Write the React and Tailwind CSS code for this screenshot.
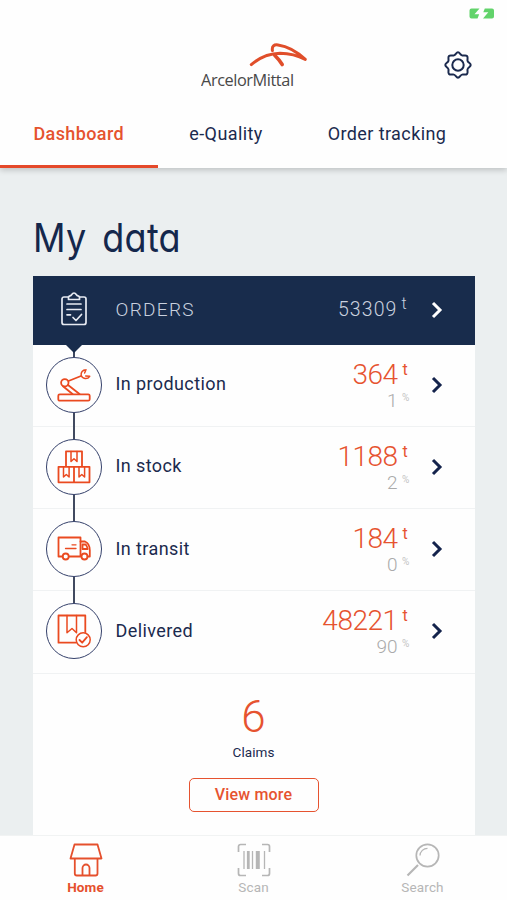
import React from "react";

const Chevron = ({ className }) => (
  <svg viewBox="0 0 12 18" className={`h-[18px] w-3 shrink-0 ${className}`} fill="none" stroke="currentColor" strokeWidth="3">
    <path d="M2 2l7 7-7 7" />
  </svg>
);

const Logo = () => (
  <svg viewBox="0 0 60 26" className="ml-[48px] h-[26px] w-[60px]" fill="none" stroke="#e04e2a" strokeLinecap="round" strokeLinejoin="round">
    <path d="M2.300 22.600C11 15 21 11.400 31 11.200c10 .1 18 2.300 25.300 6.200C49 10.500 39 4.300 29 2.900c-4-.5-6.200 1-5.600 5.600" strokeWidth="3" />
    <path d="M25.500 13c2.500 2.500 5.500 6 7.700 9.500" strokeWidth="3.600" />
  </svg>
);

const Gear = () => (
  <svg viewBox="0 0 28 28" className="h-7 w-7" fill="none" stroke="#1b2a4e" strokeWidth="2" strokeLinejoin="round">
    <path d="M14 1.300C15.800 1.300 16.300 3.900 18 4.400C19.700 5 21.600 3.600 23 5C24.400 6.400 23 8.300 23.600 10C24.100 11.700 26.700 12.200 26.700 14C26.700 15.800 24.100 16.300 23.600 18C23 19.700 24.400 21.600 23 23C21.600 24.400 19.700 23 18 23.600C16.300 24.100 15.800 26.700 14 26.700C12.200 26.700 11.700 24.100 10 23.600C8.300 23 6.400 24.400 5 23C3.600 21.600 5 19.700 4.400 18C3.900 16.300 1.300 15.800 1.300 14C1.300 12.200 3.900 11.700 4.400 10C5 8.300 3.600 6.400 5 5C6.400 3.600 8.300 5 10 4.400C11.700 3.900 12.200 1.300 14 1.300Z" />
    <circle cx="14" cy="14" r="5.700" />
  </svg>
);

const Battery = () => (
  <svg viewBox="0 0 26 11" className="h-[11px] w-[26px]" fill="#62d36b">
    <path d="M2 0.500h8.500L5.500 6.300h4.700L8.500 10.500H2.500a2 2 0 0 1-2-2V2.500a2 2 0 0 1 2-2zM15.800 0.500H23a2 2 0 0 1 2 2v6a2 2 0 0 1-2 2H14l5.300-6.300h-5z" />
  </svg>
);

const Clipboard = () => (
  <svg viewBox="0 0 26 34" className="-mt-[3px] h-[34px] w-[26px]" fill="none" stroke="#e6eaf2" strokeWidth="1.700" strokeLinejoin="round" strokeLinecap="round">
    <path d="M7 5H3a2 2 0 0 0-2 2v23.500a2 2 0 0 0 2 2h20a2 2 0 0 0 2-2V7a2 2 0 0 0-2-2h-4" />
    <path d="M7.500 7.500V5.200C7.500 4 9 3.800 10 3.500 10.800 2.400 11.500 1 13 1s2.200 1.400 3 2.500c1 .3 2.500.5 2.500 1.700v2.300z" />
    <path d="M6 12h14M6 17.500h14M6 22.800h3.500M12 25.500l3 3 5.500-6" />
  </svg>
);

const icon = "h-[34px] w-[34px]";
const orange = { fill: "none", stroke: "#ea4a20", strokeWidth: 1.8, strokeLinejoin: "round", strokeLinecap: "round" };

const Robot = () => (
  <svg viewBox="0 0 34 34" className={icon} {...orange}>
    <rect x="1.300" y="26.300" width="31.400" height="6.400" rx="1.500" />
    <circle cx="7.800" cy="14.800" r="3.700" />
    <path d="M6 18.300l9.500 7.700M11 17l11.500 9M11.500 13l12.500-5" />
    <path d="M29 1.800C25.500 2 23.700 4.400 24.200 7.400C25.300 11 30.500 11.600 32.700 8.300M29 1.800L27.600 5M28.700 8L32.700 8.300" strokeWidth="1.500" />
  </svg>
);

const Boxes = () => (
  <svg viewBox="0 0 34 34" className={icon} {...orange}>
    <path d="M9 1.300h16v15.500H9zM1.500 16.800H17v15.500H1.500zM17 16.800h15.500v15.500H17z" />
    <path d="M14 1.500v10l3-2.700 3 2.700v-10M6.500 17v10l2.800-2.500 2.800 2.500V17M22 17v10l2.800-2.500 2.800 2.500V17" strokeWidth="1.500" />
  </svg>
);

const Truck = () => (
  <svg viewBox="0 0 34 34" className={icon} {...orange}>
    <path d="M5.500 24.500h-4v-19h22v19H12" />
    <path d="M23.500 9.500H28c3.500 1.500 5 6 4.800 10v5h-2.200M25.500 12.500h3.200c1 1.300 1.800 3 2 4.500h-5.200z" />
    <path d="M8.500 16.500h10.500M15 12.800h4" strokeWidth="1.300" />
    <circle cx="8.700" cy="24.500" r="3" />
    <circle cx="27.500" cy="24.500" r="3" />
  </svg>
);

const Parcel = () => (
  <svg viewBox="0 0 34 34" className={icon} {...orange}>
    <path d="M18.500 28.700H1.500V1.500h26.800v16.500" />
    <path d="M10 1.500v17.200l5-4.200 4.500 4.200V1.500" strokeWidth="1.500" />
    <circle cx="26.200" cy="25.800" r="7" strokeWidth="1.500" />
    <path d="M22.500 26l2.700 2.700 4.700-5.500" />
  </svg>
);

const rows = [
  { label: "In production", value: "364", pct: "1", Icon: Robot },
  { label: "In stock", value: "1188", pct: "2", Icon: Boxes },
  { label: "In transit", value: "184", pct: "0", Icon: Truck },
  { label: "Delivered", value: "48221", pct: "90", Icon: Parcel },
];

const Row = ({ label, value, pct, Icon, last }) => (
  <div className="flex h-[82.25px] border-b-[1.500px] border-[#f0f2f3]">
    <div className="flex w-[83px] shrink-0 flex-col items-center">
      <div className="h-[12px] w-[1.500px] shrink-0 bg-[#414a60]" />
      <div className="flex h-[56px] w-[56px] shrink-0 items-center justify-center rounded-full border-[1.700px] border-[#35416b]">
        <Icon />
      </div>
      {!last && <div className="h-[14px] w-[1.500px] shrink-0 bg-[#414a60]" />}
    </div>
    <div className="w-[160px] pt-[27.500px] text-[18px] leading-[24px] tracking-[0.400px]">{label}</div>
    <div className="flex flex-1 flex-col pt-[14px]">
      <div className="flex justify-end">
        <span className="text-[28px] leading-[32px] font-light tracking-[-0.500px] text-[#e65330]">{value}</span>
        <span className="w-[20.500px] pl-[5px] text-[16px] leading-[22px] text-[#e65330]">t</span>
      </div>
      <div className="flex justify-end text-[#aaaaaa]">
        <span className="text-[19px] leading-[20px] font-light">{pct}</span>
        <span className="w-[20.500px] pl-[4.500px] text-[10px] leading-[14px] text-[#c4c4c4]">%</span>
      </div>
    </div>
    <div className="w-[56.500px] pt-[31px] pl-[12.500px]">
      <Chevron className="text-[#14234c]" />
    </div>
  </div>
);

const NavItem = ({ label, active, children }) => (
  <div className={`flex w-[169px] flex-col items-center pt-[7px] ${active ? "pl-[2px] font-bold text-[#e5502d]" : "text-[#b6b6b6]"}`}>
    {children}
    <span className="mt-[2px] text-[13.500px] leading-[16px] tracking-[0.150px]">{label}</span>
  </div>
);

export default function App() {
  return (
    <div className="flex h-[900px] w-[507px] flex-col overflow-hidden bg-[#ebeff0] font-['Roboto',sans-serif] text-[#1b2a4e]">
      <header className="z-10 h-[168px] shrink-0 bg-[#fefefe] shadow-[0_2px_6px_rgba(0,0,0,0.2)]">
        <div className="flex h-[42px] justify-end pt-[8px] pr-[12px]">
          <Battery />
        </div>
        <div className="flex h-[64px] justify-between pr-[35px] pl-[201px]">
          <div>
            <Logo />
            <div className="w-[100px] origin-left scale-x-[0.96] font-['Open_Sans',sans-serif] text-[17px] leading-[24px] tracking-[-0.450px] whitespace-nowrap text-[#484848]">ArcelorMittal</div>
          </div>
          <div className="pt-[9px]">
            <Gear />
          </div>
        </div>
        <nav className="flex h-[62px] text-[18px] leading-[24px]">
          <div className="w-[157.500px] border-b-[3px] border-[#e5492a] pt-[16px] text-center font-medium tracking-[0.400px] text-[#e5532f]">Dashboard</div>
          <div className="w-[137px] pt-[16px] text-center tracking-[0.400px]">e-Quality</div>
          <div className="w-[185px] pt-[16px] text-center tracking-[0.400px]">Order tracking</div>
        </nav>
      </header>

      <main className="h-[667px] shrink-0 overflow-hidden px-[32.500px]">
        <h1 className="h-[108px] origin-left scale-x-[0.900] pt-[46px] font-['Inter',sans-serif] text-[40px] leading-[48px] font-normal tracking-[0.300px] text-[#14274c] [font-feature-settings:'cv11'] [word-spacing:6px]">My data</h1>
        <section className="bg-[#fefefe]">
          <div className="flex h-[68.500px] items-center bg-[#182c4c] text-[#c9d1df]">
            <div className="flex w-[83px] justify-center">
              <Clipboard />
            </div>
            <div className="text-[19px] font-light tracking-[1.300px]">ORDERS</div>
            <div className="flex flex-1 justify-end">
              <span className="text-[19.500px] leading-[24px] font-light tracking-[1.100px]">53309</span>
              <span className="-mt-[4px] w-[20.500px] pl-[4px] text-[16px] leading-[20px] font-light">t</span>
            </div>
            <div className="w-[56.500px] pl-[12.500px]">
              <Chevron className="text-white" />
            </div>
          </div>
          <div className="relative">
            <svg viewBox="0 0 16 8" className="absolute top-0 left-[33.500px] h-[8px] w-4" fill="#182c4c">
              <path d="M0 0h16L8 8z" />
            </svg>
            {rows.map((r, i) => (
              <Row key={r.label} {...r} last={i === rows.length - 1} />
            ))}
          </div>
          <div className="flex h-[170px] flex-col items-center pt-[19px]">
            <div className="text-[44px] leading-[48px] font-light text-[#e65330]">6</div>
            <div className="mt-[2.500px] text-[13.500px] leading-[18px] tracking-[0.050px]">Claims</div>
            <button className="mt-[16.500px] h-[34px] w-[130px] rounded-[5px] border-[1.500px] border-[#e65330] text-[16px] leading-[20px] font-medium tracking-[0.200px] text-[#e65330]">View more</button>
          </div>
        </section>
      </main>

      <footer className="flex h-[65px] shrink-0 border-t border-[#f1f3f3] bg-[#fefefe]">
        <NavItem label="Home" active>
          <svg viewBox="0 0 34 34" className="h-[34px] w-[34px]" fill="none" stroke="currentColor" strokeWidth="1.800" strokeLinejoin="round">
            <path d="M5.500 1.500h23l4 14H1.500zM5.800 15.500v15a2 2 0 0 0 2 2H26.500a2 2 0 0 0 2-2v-15M13.500 32.500V25a3.500 3.500 0 0 1 7 0v7.500" />
          </svg>
        </NavItem>
        <NavItem label="Scan">
          <svg viewBox="0 0 34 34" className="h-[34px] w-[34px]" fill="none" stroke="currentColor" strokeWidth="1.700" strokeLinejoin="round">
            <path d="M1.500 9V3.500a2 2 0 0 1 2-2H9M25 1.500h5.500a2 2 0 0 1 2 2V9M32.500 25v5.500a2 2 0 0 1-2 2H25M9 32.500H3.500a2 2 0 0 1-2-2V25" />
            <path d="M7 8v18M15.500 8v18M27.500 8v18" strokeWidth="1.300" />
            <path d="M11.300 8v18" strokeWidth="2.800" />
            <path d="M20.800 8v18" strokeWidth="4" />
          </svg>
        </NavItem>
        <NavItem label="Search">
          <svg viewBox="0 0 34 34" className="h-[34px] w-[34px]" fill="none" stroke="currentColor" strokeWidth="1.700">
            <circle cx="21.500" cy="12.500" r="11.200" />
            <path d="M14 12.500a7.500 7.500 0 0 1 7.500-7.200" strokeWidth="1.300" />
            <path d="M12 22L1.500 32.500" strokeWidth="2.200" />
          </svg>
        </NavItem>
      </footer>
    </div>
  );
}
